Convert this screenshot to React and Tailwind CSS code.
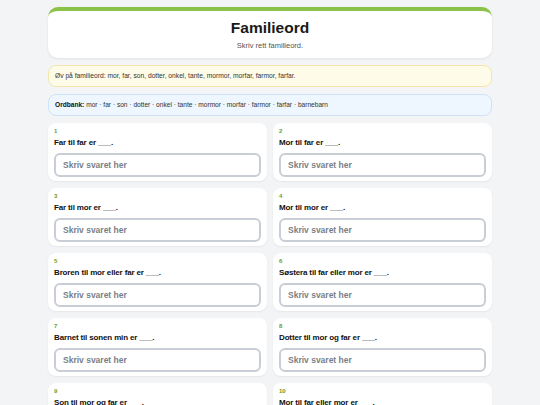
const questions = [
    "Far til far er ___.",
    "Mor til far er ___.",
    "Far til mor er ___.",
    "Mor til mor er ___.",
    "Broren til mor eller far er ___.",
    "Søstera til far eller mor er ___.",
    "Barnet til sonen min er ___.",
    "Dotter til mor og far er ___.",
    "Son til mor og far er ___.",
    "Mor til far eller mor er ___.",
];

const words = ["mor", "far", "son", "dotter", "onkel", "tante", "mormor", "morfar", "farmor", "farfar", "barnebarn"];

function QuestionCard({n, text}) {
    return (
        <div className="bg-white rounded-[8px] shadow-[0_1px_2px_rgba(0,0,0,0.06)] px-[6px] pt-[4px] pb-[4px]">
            <div className="text-[6px] leading-[8px] text-[#6a9a2a] font-semibold">{n}</div>
            <div className="text-[8px] leading-[8px] font-bold text-[#111] mt-[4px] tracking-[-0.15px]">{text}</div>
            <input
                type="text"
                placeholder="Skriv svaret her"
                className="mt-[6px] w-full h-[24px] rounded-[6px] border-2 border-[#c9ced6] px-[7px] text-[8.5px] font-bold text-[#333] placeholder:text-[#7a7f87] outline-none"
            />
        </div>
    );
}

export default function App() {
    return (
        <div className="min-h-screen bg-[#f3f4f6] pt-[7px] pb-6" style={{fontFamily: '"Liberation Sans", Arial, sans-serif'}}>
            <div className="w-[444px] mx-auto flex flex-col gap-[7px]">
                <div className="bg-white rounded-[10px] border-t-4 border-[#8bc34a] shadow-[0_1px_3px_rgba(0,0,0,0.08)] text-center pt-[8px] pb-[7px]">
                    <h1 className="text-[15.5px] leading-[18px] font-bold text-[#1a1a1a]">Familieord</h1>
                    <p className="text-[7.5px] leading-[11px] text-[#555] mt-[3px]">Skriv rett familieord.</p>
                </div>
                <div className="bg-[#fefce8] border border-[#f3e6a8] rounded-[8px] h-[22px] flex items-center px-[6px] text-[6.7px] text-[#333]">
                    Øv på familieord: mor, far, son, dotter, onkel, tante, mormor, morfar, farmor, farfar.
                </div>
                <div className="bg-[#eef6ff] border border-[#cfe2f7] rounded-[8px] h-[22px] flex items-center px-[6px] text-[6.6px] text-[#333] whitespace-pre">
                    <span className="font-bold text-[#111]">Ordbank: </span>
                    {words.join(" · ")}
                </div>
                <div className="grid grid-cols-2 gap-x-[6px] gap-y-[7px]">
                    {questions.map((q, i) => (
                        <QuestionCard key={i} n={i + 1} text={q}/>
                    ))}
                </div>
            </div>
        </div>
    );
}
